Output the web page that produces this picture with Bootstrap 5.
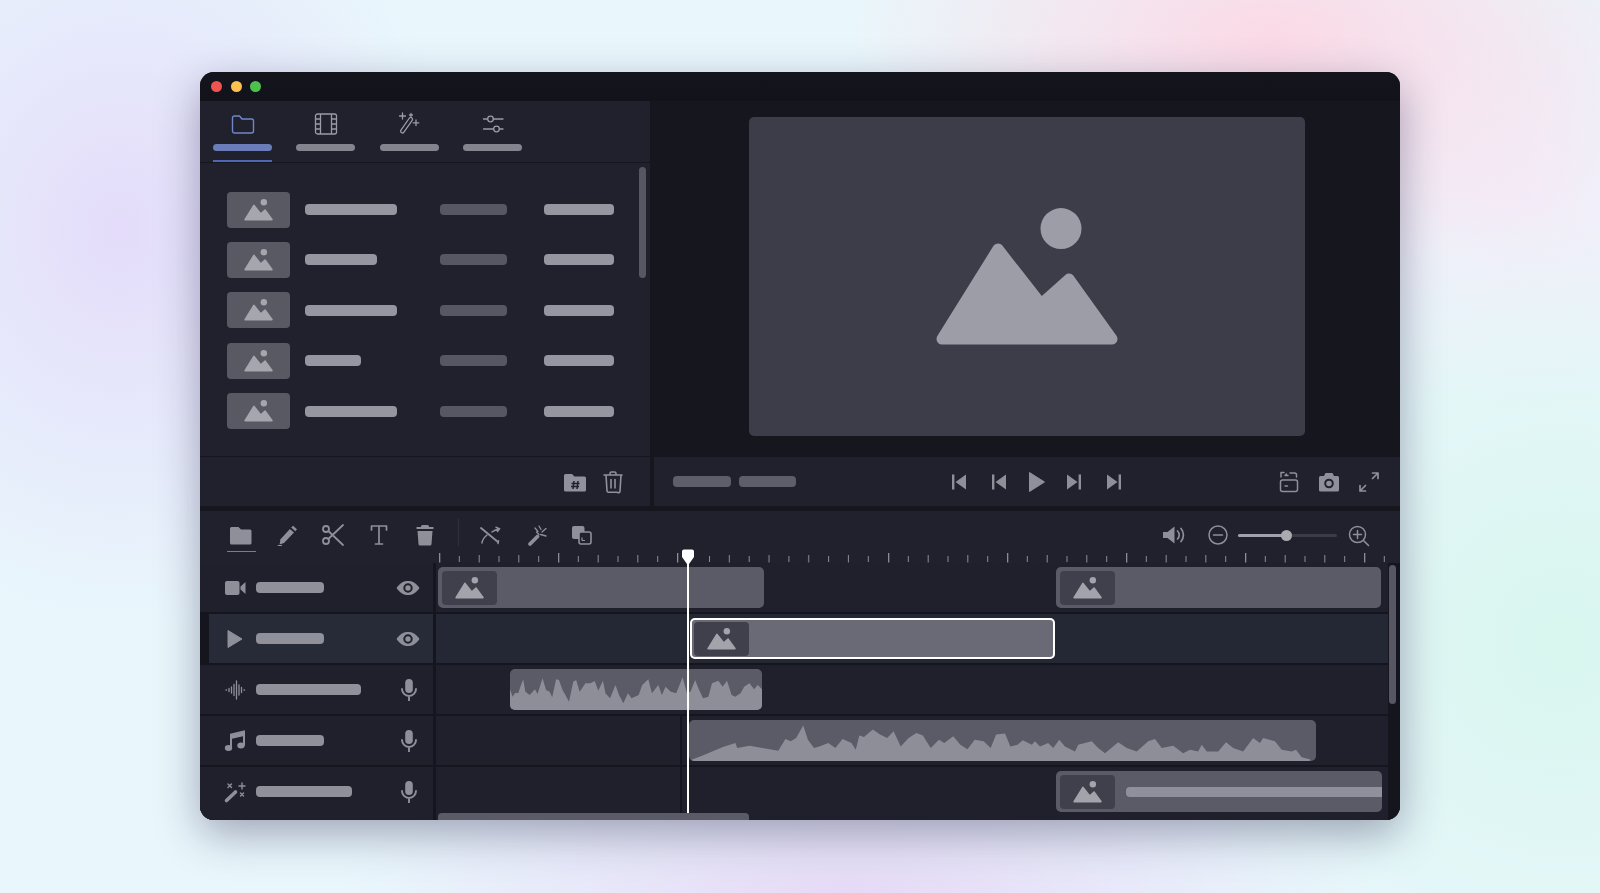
<!DOCTYPE html>
<html lang="en">
<head>
<meta charset="utf-8">
<title>Video editor</title>
<link href="https://cdn.jsdelivr.net/npm/bootstrap@5.3.0/dist/css/bootstrap.min.css" rel="stylesheet">
<style>
html,body{height:100%}
body{margin:0;overflow:hidden;background-color:#e9f7fc;background-image:
radial-gradient(ellipse 430px 230px at 1270px 40px,#fbd9e6 0%,rgba(251,217,230,0) 100%),
radial-gradient(ellipse 340px 400px at 120px 230px,#e4dcfa 0%,rgba(228,220,250,0) 100%),
radial-gradient(ellipse 520px 130px at 850px 893px,#e6d9f6 0%,rgba(230,217,246,0) 100%),
radial-gradient(ellipse 400px 420px at 1560px 640px,#d9f6ef 0%,rgba(217,246,239,0) 100%),
radial-gradient(ellipse 300px 220px at 1520px 200px,#f3ecf8 0%,rgba(243,236,248,0) 100%);
padding-top:72px}
.appwin{width:1200px;height:748px;border-radius:14px;background:#15161e;box-shadow:0 14px 44px rgba(45,40,80,.4);overflow:hidden;position:relative}
.tbar{height:29px;padding-left:11px;gap:8.5px;background:linear-gradient(#14141d,#11121a)}
.dot{width:11px;height:11px;border-radius:50%}
.dot-r{background:#ef5350}.dot-y{background:#fcc04d}.dot-g{background:#4fc04d}
.topzone{height:405px}
.lpanel{width:450px;background:#20212c;position:relative}
.tabsbar{height:62px;padding-left:13px;gap:24.4px;border-bottom:1px solid #14151d}
.tabi{width:59px;height:61px;padding-top:11px;color:#9a9ba4}
.tabi svg{display:block;margin:0 auto 8px}
.tabi-on{color:#6f86c8;border-bottom:2px solid #4f66b8}
.pilltab{height:7px;border-radius:4px;background:#83848e}
.tabi-on .pilltab{background:#6b7db8}
.flist{height:293px;padding:28.5px 0 0 27px;gap:14.4px}
.frow{height:36px}
.thumbl{width:63px;height:36px;border-radius:4px;background:#585963;color:#a5a6ae;margin-right:15px}
.bar{height:11px;border-radius:4px;display:block}
.bar-name{background:#9596a0}
.bar-dim{background:#565762}
.cellname{width:135px}
.cellmid{width:104px}
.lfoot{height:50px;border-top:1px solid #14151d;padding-right:25px;gap:14px;color:#90919b}
.vscroll{position:absolute;left:439px;top:66px;width:7px;height:111px;border-radius:4px;background:#565762}
.prev{margin-left:4px;width:746px}
.previewzone{height:356px;padding-top:16px;padding-left:95px}
.screen{width:556px;height:319px;border-radius:5px;background:#3c3d49;color:#9c9da6;padding-top:91px;padding-left:186px}
.ctrlbar{height:49px;background:#20212c;padding:0 19px}
.ctrl-l{gap:8px;width:123px;margin-left:0}
.bar-t{width:58px;background:#5d5e69}
.ctrlgrid{display:grid;grid-template-columns:40px 38px 37px 40px 24px;margin-left:151px;color:#8e8f99}
.ctrlright{gap:16px;color:#8e8f99}
.timeline{margin-top:5px;background:#20212c;height:309px;position:relative}
.toolb{height:41px;padding-left:27px;color:#8e8f99}
.tool{width:29px;height:41px;margin-right:17px;padding-top:12px}
.tool svg{display:block}
.tool-on{border-bottom:1px solid #6a78d0}
.sepv{width:1px;height:27px;background:#30313c;margin-right:16px;margin-left:1px}
.tool-b{margin-right:15px;width:32px}
.tool-c{margin-right:15px}
.volz{color:#8e8f99;margin-right:30px}
.sldr{width:99px;height:3px;border-radius:2px;background:#3a3b46;position:relative;margin:0 9px 0 8px}
.sldr-fill{display:block;width:49px;height:3px;border-radius:2px;background:#a0a1aa}
.sldr-knob{position:absolute;left:43px;top:-4px;width:11px;height:11px;border-radius:50%;background:#a9aab2}
.vol-minus{margin-left:20px}
.rulerrow{height:11px;padding-left:236px}
.rulerrow svg{display:block}
.rowt{height:51px;border-bottom:2px solid #14151d}
.rowt-last{height:53px;border-bottom:0}
.rowt-last .rlabel{padding-bottom:4px}
.rlabel{width:233px;flex:none;color:#8e8f99;padding-left:23px;border-right:0}
.rlabel-on{margin-left:9px;width:224px;padding-left:14px;background:#272b38}
.ic-box{width:24px;flex:none;margin-right:9px}
.ic-box svg{display:block}
.lbar{background:#8f9099}
.rlab-end{margin-left:auto;margin-right:13px}
.rlab-end svg{display:block}
.lane{width:952px;flex:none;margin-left:3px;position:relative}
.lanewrap{display:flex;background:#14151d}
.rlabel,.lane{background-color:#1f202b}
.rlabel-on{background-color:#272b38}
.lane-on{background-color:#242734}
.clipx{height:41px;margin-top:4px;flex:none;border-radius:5px;background:#5a5b66;overflow:hidden;display:flex;align-items:flex-start}
.clip-sel{background:#696a75;box-shadow:0 0 0 2px #fff inset}
.thumbc{width:55px;height:34px;margin:4px 0 0 4px;border-radius:4px;background:#3f404c;color:#a2a3ab;flex:none}
.clipbar{height:10px;background:#8f909b;flex:1;margin:16px 0 0 11px;border-radius:4px 0 0 4px}
.clipx svg.wv{display:block}
.wvf{fill:#8d8e98;filter:blur(.5px)}
.scr-v{position:absolute;left:1189px;top:54px;width:7px;height:139px;border-radius:4px;background:#565762}
.scr-h{position:absolute;left:238px;top:302px;width:311px;height:7px;border-radius:4px 4px 0 0;background:#5a5b66}
.play-line{position:absolute;left:487px;top:41px;width:1.6px;height:261px;background:#fff}
.play-head{position:absolute;left:481px;top:38px;display:block}
.ghostline{position:absolute;left:480px;top:205px;width:1.5px;height:97px;background:#14151d}
</style>
</head>
<body class="d-flex justify-content-center align-items-start">
<svg width="0" height="0" class="position-absolute">
<defs>
<symbol id="pic" viewBox="0 0 184 140"><circle cx="126" cy="20.6" r="20.5" fill="currentColor"/><path d="M7 131 63 41 106 96 134 71 177 131Z" fill="currentColor" stroke="currentColor" stroke-width="11" stroke-linejoin="round"/></symbol>
<symbol id="eye" viewBox="0 0 24 16"><path d="M.5 8C4 2.6 8 1 12 1s8 1.6 11.500 7C20 13.400 16 15 12 15S4 13.400.5 8Z" fill="currentColor"/><circle cx="12" cy="8" r="3.700" fill="none" stroke="#1f202b" stroke-width="2"/></symbol>
<symbol id="mic" viewBox="0 0 16 22"><rect x="4.200" y="0" width="7.600" height="14" rx="3.800" fill="currentColor"/><path d="M1 10a7 7 0 0 0 14 0M8 17v4.500" fill="none" stroke="currentColor" stroke-width="1.900" stroke-linecap="round"/></symbol>
</defs>
</svg>

<div class="appwin d-flex flex-column">
  <div class="tbar d-flex align-items-center flex-none">
    <span class="dot dot-r"></span><span class="dot dot-y"></span><span class="dot dot-g"></span>
  </div>

  <div class="topzone d-flex">
    <section class="lpanel d-flex flex-column">
      <div class="tabsbar d-flex">
        <div class="tabi tabi-on"><svg width="24" height="24" viewBox="0 0 24 24" fill="none" stroke="currentColor" stroke-width="1.400" stroke-linejoin="round"><path d="M1.500 6a2 2 0 0 1 2-2h5l2.500 3h9.500a2 2 0 0 1 2 2v10a2 2 0 0 1-2 2h-17a2 2 0 0 1-2-2Z"/></svg><div class="pilltab"></div></div>
        <div class="tabi"><svg width="24" height="24" viewBox="0 0 24 24" fill="none" stroke="currentColor" stroke-width="1.300"><rect x="1.500" y="2" width="21" height="20" rx="2"/><path d="M6.500 2v20M17.500 2v20M1.500 7h5M1.500 12h5M1.500 17h5M17.500 7h5M17.500 12h5M17.500 17h5"/></svg><div class="pilltab"></div></div>
        <div class="tabi"><svg width="24" height="24" viewBox="0 0 24 24" fill="none" stroke="currentColor" stroke-width="1.300" stroke-linecap="round"><rect x="-1.800" y="-10" width="3.600" height="18" rx="1.800" transform="translate(9 14) rotate(35)"/><path d="M5.500 1v6M2.500 4h6M19 8v5.500M16.200 10.800h5.600M14 1.500v3M12.500 3h3"/></svg><div class="pilltab"></div></div>
        <div class="tabi"><svg width="24" height="24" viewBox="0 0 24 24" fill="none" stroke="currentColor" stroke-width="1.300" stroke-linecap="round"><circle cx="9.500" cy="7" r="2.800"/><circle cx="15.500" cy="17" r="2.800"/><path d="M2.500 7h4M12.500 7h9.500M2.500 17h10M18.500 17H22"/></svg><div class="pilltab"></div></div>
      </div>
      <div class="flist d-flex flex-column">
        <div class="frow d-flex align-items-center"><div class="thumbl d-flex align-items-center justify-content-center"><svg width="29" height="22"><use href="#pic"/></svg></div><div class="cellname"><span class="bar bar-name" style="width:92px"></span></div><div class="cellmid"><span class="bar bar-dim" style="width:67px"></span></div><span class="bar bar-name" style="width:70px"></span></div>
        <div class="frow d-flex align-items-center"><div class="thumbl d-flex align-items-center justify-content-center"><svg width="29" height="22"><use href="#pic"/></svg></div><div class="cellname"><span class="bar bar-name" style="width:72px"></span></div><div class="cellmid"><span class="bar bar-dim" style="width:67px"></span></div><span class="bar bar-name" style="width:70px"></span></div>
        <div class="frow d-flex align-items-center"><div class="thumbl d-flex align-items-center justify-content-center"><svg width="29" height="22"><use href="#pic"/></svg></div><div class="cellname"><span class="bar bar-name" style="width:92px"></span></div><div class="cellmid"><span class="bar bar-dim" style="width:67px"></span></div><span class="bar bar-name" style="width:70px"></span></div>
        <div class="frow d-flex align-items-center"><div class="thumbl d-flex align-items-center justify-content-center"><svg width="29" height="22"><use href="#pic"/></svg></div><div class="cellname"><span class="bar bar-name" style="width:56px"></span></div><div class="cellmid"><span class="bar bar-dim" style="width:67px"></span></div><span class="bar bar-name" style="width:70px"></span></div>
        <div class="frow d-flex align-items-center"><div class="thumbl d-flex align-items-center justify-content-center"><svg width="29" height="22"><use href="#pic"/></svg></div><div class="cellname"><span class="bar bar-name" style="width:92px"></span></div><div class="cellmid"><span class="bar bar-dim" style="width:67px"></span></div><span class="bar bar-name" style="width:70px"></span></div>
      </div>
      <div class="lfoot d-flex align-items-center justify-content-end">
        <svg width="24" height="24" viewBox="0 0 24 24"><path d="M1 5.500A1.500 1.500 0 0 1 2.500 4h6.500l2.500 2.500h10A1.500 1.500 0 0 1 23 8v12a1.500 1.500 0 0 1-1.500 1.500h-19A1.500 1.500 0 0 1 1 20Z" fill="currentColor"/><path d="M11 11l-1 8M15 11l-1 8M8.500 13.500h8M8 16.500h8" stroke="#20212c" stroke-width="1.500" fill="none"/></svg>
        <svg width="24" height="24" viewBox="0 0 24 24" fill="none" stroke="currentColor" stroke-width="1.600" stroke-linecap="round" stroke-linejoin="round"><path d="M3 5h18M9 5V3.500A1.500 1.500 0 0 1 10.500 2h3A1.500 1.500 0 0 1 15 3.500V5M5 5l1 16a1.500 1.500 0 0 0 1.500 1.300h9A1.500 1.500 0 0 0 19 21l1-16M10 9.500v8.500M14 9.500v8.500"/></svg>
      </div>
      <div class="vscroll"></div>
    </section>

    <section class="prev d-flex flex-column">
      <div class="previewzone">
        <div class="screen"><svg width="184" height="140"><use href="#pic"/></svg></div>
      </div>
      <div class="ctrlbar d-flex align-items-center">
        <div class="ctrl-l d-flex"><span class="bar bar-t"></span><span class="bar bar-t"></span></div>
        <div class="ctrlgrid">
          <svg width="24" height="24" viewBox="0 0 24 24" fill="currentColor"><rect x="5" y="4.500" width="2.400" height="15"/><path d="M19 4.500V19.500L8.500 12Z"/></svg>
          <svg width="24" height="24" viewBox="0 0 24 24" fill="currentColor"><rect x="5" y="4.500" width="2.400" height="15"/><path d="M19 4.500V19.500L8.500 12Z"/></svg>
          <svg width="24" height="24" viewBox="0 0 24 24" fill="currentColor"><path d="M4.500 2.500 19.500 12 4.500 21.500Z" stroke="currentColor" stroke-width="1" stroke-linejoin="round"/></svg>
          <svg width="24" height="24" viewBox="0 0 24 24" fill="currentColor"><path d="M5 4.500V19.500L15.500 12Z"/><rect x="16.600" y="4.500" width="2.400" height="15"/></svg>
          <svg width="24" height="24" viewBox="0 0 24 24" fill="currentColor"><path d="M5 4.500V19.500L15.500 12Z"/><rect x="16.600" y="4.500" width="2.400" height="15"/></svg>
        </div>
        <div class="ctrlright d-flex ms-auto">
          <svg width="24" height="24" viewBox="0 0 24 24" fill="none" stroke="currentColor" stroke-width="1.500" stroke-linecap="round" stroke-linejoin="round"><rect x="3.500" y="10" width="17" height="11.500" rx="2"/><path d="M8 16h2.500M4 7V2.500h3M11 5.500h-3l1.500-1.500M13 3h4.500a2 2 0 0 1 2 2v2"/></svg>
          <svg width="24" height="24" viewBox="0 0 24 24"><path d="M2 7.500A1.500 1.500 0 0 1 3.500 6H7l1.500-3h7L17 6h3.500A1.500 1.500 0 0 1 22 7.500V20a1.500 1.500 0 0 1-1.500 1.500h-17A1.500 1.500 0 0 1 2 20Z" fill="currentColor"/><circle cx="12" cy="13.500" r="3.800" fill="none" stroke="#20212c" stroke-width="2"/></svg>
          <svg width="24" height="24" viewBox="0 0 24 24" fill="none" stroke="currentColor" stroke-width="1.700" stroke-linecap="round" stroke-linejoin="round"><path d="M15.500 8.500 21 3M15.500 3H21v5.500M8.500 15.500 3 21M3 15.500V21h5.500"/></svg>
        </div>
      </div>
    </section>
  </div>

  <section class="timeline">
    <div class="toolb d-flex align-items-start">
      <div class="tool tool-on"><svg width="28" height="24" viewBox="0 0 28 24"><path d="M3 5.500A1.500 1.500 0 0 1 4.500 4h7l2.500 2.500h9A1.500 1.500 0 0 1 24.500 8v12a1.500 1.500 0 0 1-1.500 1.500H4.500A1.500 1.500 0 0 1 3 20Z" fill="currentColor"/></svg></div>
      <div class="tool"><svg width="28" height="24" viewBox="0 0 28 24" fill="currentColor"><path d="M20 2.700 24 6.200 22.300 8.200 18.200 4.600Z"/><path d="M16.900 6 21 9.600 11 20 6.500 21.500 7.500 16.300Z"/><path d="M5 22h4v.9H4.500Z"/></svg></div>
      <div class="tool"><svg width="28" height="24" viewBox="0 0 28 24" fill="none" stroke="currentColor" stroke-width="1.800" stroke-linecap="round"><circle cx="7" cy="6" r="3"/><circle cx="7" cy="18" r="3"/><path d="M9.300 8 24 22M9.300 16 24 2"/></svg></div>
      <div class="tool"><svg width="28" height="24" viewBox="0 0 28 24" fill="none" stroke="currentColor" stroke-width="1.700" stroke-linecap="round" stroke-linejoin="round"><path d="M6.500 7V3h15v4M14 3v18M10.500 21h7"/></svg></div>
      <div class="tool"><svg width="28" height="24" viewBox="0 0 28 24" fill="currentColor"><path d="M10 3.500a1.500 1.500 0 0 1 1.500-1.500h5A1.500 1.500 0 0 1 18 3.500V4h4.500v2h-17V4H10Z"/><path d="M6.500 8h15l-1 13a1.500 1.500 0 0 1-1.500 1.500H9A1.500 1.500 0 0 1 7.500 21Z"/></svg></div>
      <span class="sepv mt-2"></span>
      <div class="tool tool-b"><svg width="30" height="24" viewBox="0 0 30 24" fill="none" stroke="currentColor" stroke-width="1.500" stroke-linecap="round"><path d="M6 5 23 19" stroke-width="1.900"/><path d="M7 20Q7.500 15.500 12 12M17 9Q19.500 7 24 6M21 4.200l3.500 1.600-2 2.700M23 20.500l.5-2.700"/></svg></div>
      <div class="tool tool-b tool-c"><svg width="30" height="24" viewBox="0 0 30 24" fill="none" stroke="currentColor" stroke-linecap="round"><path d="M8 21 15.500 13.500" stroke-width="3.800"/><path d="M13 5l3 3.500M17 3l2 3.500M20 9l4-3.500M18.500 11.500l5.500 1.500M14.500 9l2.500 2.500" stroke-width="1.300"/></svg></div>
      <div class="tool tool-b"><svg width="30" height="24" viewBox="0 0 30 24"><rect x="3" y="3" width="12.500" height="13" rx="2" fill="currentColor"/><rect x="10" y="9" width="12" height="12" rx="2" fill="#20212c" stroke="currentColor" stroke-width="1.600"/><path d="M13 17.500h3M13 14.500v3" fill="none" stroke="currentColor" stroke-width="1.200"/></svg></div>
      <div class="volz d-flex align-items-center ms-auto mt-2 pt-1">
        <svg width="24" height="24" viewBox="0 0 24 24"><path d="M1 9h4.500L12.500 3.500v17L5.500 15H1Z" fill="currentColor"/><path d="M15.500 8a5.500 5.500 0 0 1 0 8M19 5.500a10 10 0 0 1 0 13" fill="none" stroke="currentColor" stroke-width="1.700" stroke-linecap="round"/></svg>
        <svg class="vol-minus" width="24" height="24" viewBox="0 0 24 24" fill="none" stroke="currentColor" stroke-width="1.500" stroke-linecap="round"><circle cx="12" cy="12" r="9"/><path d="M7.500 12h9"/></svg>
        <div class="sldr"><span class="sldr-fill"></span><span class="sldr-knob"></span></div>
        <svg width="24" height="24" viewBox="0 0 24 24" fill="none" stroke="currentColor" stroke-width="1.500" stroke-linecap="round"><circle cx="11.500" cy="11.500" r="8"/><path d="M11.500 7.500v8M7.500 11.500h8M17.500 17.500l5 5"/></svg>
      </div>
    </div>

    <div class="rulerrow">
      <svg width="950" height="11" viewBox="436 0 950 11">
        <defs>
          <pattern id="rpa" x="439" y="0" width="119" height="11" patternUnits="userSpaceOnUse"><g fill="#8b8c95"><rect x="0" y="1" width="1.300" height="9.500"/><rect x="19.800" y="4" width="1" height="6"/><rect x="39.700" y="3" width="1" height="7.500"/><rect x="59.500" y="4" width="1" height="6"/><rect x="79.300" y="3" width="1" height="7.500"/><rect x="99.200" y="4" width="1" height="6"/></g></pattern>
          <pattern id="rpb" x="709" y="0" width="39.700" height="11" patternUnits="userSpaceOnUse"><g fill="#8b8c95"><rect x="0" y="4" width="1" height="6"/><rect x="19.800" y="3" width="1" height="7.500"/></g></pattern>
          <pattern id="rpc" x="888" y="0" width="119" height="11" patternUnits="userSpaceOnUse"><g fill="#8b8c95"><rect x="0" y="1" width="1.300" height="9.500"/><rect x="19.800" y="4" width="1" height="6"/><rect x="39.700" y="3" width="1" height="7.500"/><rect x="59.500" y="4" width="1" height="6"/><rect x="79.300" y="3" width="1" height="7.500"/><rect x="99.200" y="4" width="1" height="6"/></g></pattern>
        </defs>
        <rect x="439" y="0" width="248" height="11" fill="url(#rpa)"/>
        <rect x="709" y="0" width="170" height="11" fill="url(#rpb)"/>
        <rect x="888" y="0" width="498" height="11" fill="url(#rpc)"/>
      </svg>
    </div>

    <div class="rowt lanewrap">
      <div class="rlabel d-flex align-items-center"><div class="ic-box"><svg width="24" height="24" viewBox="0 0 24 24" fill="currentColor"><rect x="2" y="5" width="14.500" height="14" rx="2"/><path d="M17.500 10.500 22.500 6V18L17.500 13.500Z"/></svg></div><span class="bar lbar" style="width:68px"></span><div class="rlab-end"><svg width="24" height="16"><use href="#eye"/></svg></div></div>
      <div class="lane d-flex">
        <div class="clipx" style="margin-left:2px;width:326px"><div class="thumbc d-flex align-items-center justify-content-center"><svg width="29" height="22"><use href="#pic"/></svg></div></div>
        <div class="clipx" style="margin-left:292px;width:325px"><div class="thumbc d-flex align-items-center justify-content-center"><svg width="29" height="22"><use href="#pic"/></svg></div></div>
      </div>
    </div>
    <div class="rowt lanewrap">
      <div class="rlabel rlabel-on d-flex align-items-center"><div class="ic-box"><svg width="24" height="24" viewBox="0 0 24 24" fill="currentColor"><path d="M5 3.500 19 12 5 20.500Z" stroke="currentColor" stroke-width="1" stroke-linejoin="round"/></svg></div><span class="bar lbar" style="width:68px"></span><div class="rlab-end"><svg width="24" height="16"><use href="#eye"/></svg></div></div>
      <div class="lane lane-on d-flex">
        <div class="clipx clip-sel" style="margin-left:254px;width:365px"><div class="thumbc d-flex align-items-center justify-content-center"><svg width="29" height="22"><use href="#pic"/></svg></div></div>
      </div>
    </div>
    <div class="rowt lanewrap">
      <div class="rlabel d-flex align-items-center"><div class="ic-box"><svg width="24" height="24" viewBox="0 0 24 24" fill="none" stroke="currentColor" stroke-width="1.300" stroke-linecap="round"><path d="M3 12h.5M6 10.500v3M8.500 9v6M11 6.500v11M13.500 3v18M16 7v10M18.500 9.500v5M21 12h.5"/></svg></div><span class="bar lbar" style="width:105px"></span><div class="rlab-end me-3"><svg width="16" height="22"><use href="#mic"/></svg></div></div>
      <div class="lane d-flex">
        <div class="clipx" style="margin-left:74px;width:252px"><svg class="wv" width="252" height="41" viewBox="85 57 705 123" preserveAspectRatio="none"><path class="wvf" d="M85 118 92 140 100 128 108 130 114 110 122 88 128 125 140 135 155 118 162 132 176 85 186 120 196 125 203 142 214 88 222 90 232 120 240 135 250 155 262 95 270 90 280 125 296 100 310 100 322 93 332 122 345 92 352 130 365 145 380 105 390 135 402 160 415 130 425 145 445 135 455 105 472 88 482 130 500 105 510 135 520 110 535 125 550 130 568 82 580 130 590 125 603 90 612 115 625 145 640 140 650 100 668 92 680 110 692 92 705 135 715 140 730 130 740 110 755 100 768 118 778 105 790 118V180H85Z"/></svg></div>
      </div>
    </div>
    <div class="rowt lanewrap">
      <div class="rlabel d-flex align-items-center"><div class="ic-box"><svg width="24" height="24" viewBox="0 0 24 24" fill="currentColor"><ellipse cx="5.500" cy="19" rx="3.700" ry="3"/><ellipse cx="18" cy="16.500" rx="3.700" ry="3"/><path d="M8 19V5.500L21 2.500V16.500" fill="none" stroke="currentColor" stroke-width="2" /><path d="M8 6 21 3V7L8 10Z"/></svg></div><span class="bar lbar" style="width:68px"></span><div class="rlab-end me-3"><svg width="16" height="22"><use href="#mic"/></svg></div></div>
      <div class="lane d-flex">
        <div class="clipx" style="margin-left:253px;width:627px"><svg class="wv" width="627" height="41" viewBox="585 212 1756 121" preserveAspectRatio="none"><path class="wvf" d="M590 330 620 318 650 305 680 292 715 280 720 295 755 288 790 295 835 303 855 268 870 275 885 265 905 228 918 270 935 295 950 290 975 280 995 295 1015 268 1040 280 1052 300 1062 258 1075 262 1100 240 1120 255 1140 265 1158 245 1178 290 1200 265 1222 250 1240 258 1262 295 1285 270 1300 280 1325 260 1345 285 1365 298 1385 270 1410 275 1430 295 1445 255 1470 252 1485 290 1505 285 1520 272 1545 285 1554 275 1568 290 1591 280 1605 295 1622 270 1638 290 1666 305 1675 285 1713 275 1731 295 1750 310 1787 278 1811 295 1839 305 1871 275 1890 268 1909 295 1941 288 1969 310 1988 300 2011 305 2021 285 2035 305 2067 305 2089 278 2109 295 2137 305 2165 265 2184 280 2193 265 2226 275 2245 300 2273 305 2285 300 2301 322 2324 328V333H590Z"/></svg></div>
      </div>
    </div>
    <div class="rowt rowt-last lanewrap">
      <div class="rlabel d-flex align-items-center"><div class="ic-box"><svg width="24" height="24" viewBox="0 0 24 24" fill="none" stroke="currentColor" stroke-linecap="round"><path d="M3.500 20.500 12.500 12" stroke-width="3.600"/><path d="M5 4l3.500 3.500M8.500 4 5 7.500M19 3v6M16 6h6M17.500 13l3 3M20.500 13l-3 3" stroke-width="1.400"/></svg></div><span class="bar lbar" style="width:96px"></span><div class="rlab-end me-3"><svg width="16" height="22"><use href="#mic"/></svg></div></div>
      <div class="lane d-flex">
        <div class="clipx" style="margin-left:620px;width:326px"><div class="thumbc d-flex align-items-center justify-content-center"><svg width="29" height="22"><use href="#pic"/></svg></div><div class="clipbar"></div></div>
      </div>
    </div>

    <div class="ghostline"></div>
    <div class="scr-v"></div>
    <div class="scr-h"></div>
    <div class="play-line"></div>
    <svg class="play-head" width="14" height="16" viewBox="0 0 14 16"><path d="M1 2.500A2 2 0 0 1 3 .5h8a2 2 0 0 1 2 2V8L8 15H6L1 8Z" fill="#fff"/></svg>
  </section>
</div>

<script src="https://cdn.jsdelivr.net/npm/bootstrap@5.3.0/dist/js/bootstrap.bundle.min.js"></script>
</body>
</html>
